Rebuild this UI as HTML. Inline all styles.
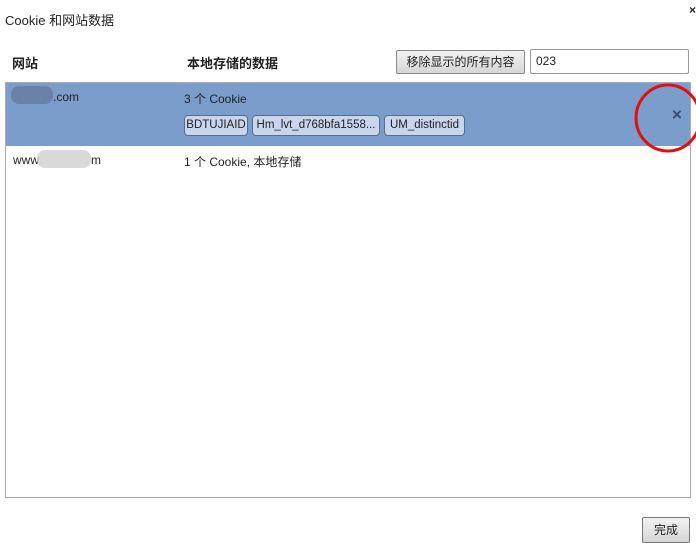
<!DOCTYPE html>
<html><head><meta charset="utf-8"><style>
body{margin:0;width:696px;height:537px;background:#fff;position:relative;overflow:hidden;font-family:"Liberation Sans","Noto Sans CJK SC",sans-serif;font-size:12px;color:#222}
.a{position:absolute;white-space:nowrap}
.chip{position:absolute;top:115px;height:19px;border:1px solid #5a6d8c;border-radius:4px;background:#c7d6ec;line-height:19px;text-align:center;font-size:11.5px;overflow:hidden}
</style></head><body>
<div class="a" style="left:5px;top:10px;font-size:13px">Cookie 和网站数据</div>
<div class="a" style="left:689px;top:3px;font-size:12px;font-weight:bold">×</div>
<div class="a" style="left:12px;top:53px;font-weight:bold;font-size:13px">网站</div>
<div class="a" style="left:187px;top:53px;font-weight:bold;font-size:13px">本地存储的数据</div>
<div class="a" style="left:396px;top:50px;width:127px;height:22px;border:1px solid #8a8a8a;border-radius:2px;background:linear-gradient(#f2f2f2,#d6d6d6);text-align:center;line-height:22px;font-size:12px">移除显示的所有内容</div>
<div class="a" style="left:530px;top:49px;width:152px;height:23px;border:1px solid #999;border-radius:2px;line-height:23px;padding-left:5px">023</div>
<div class="a" style="left:5px;top:82px;width:684px;height:414px;border:1px solid #aaa"></div>
<div class="a" style="left:6px;top:83px;width:684px;height:63px;background:#7b9dcc"></div>
<div class="a" style="left:11px;top:86px;width:42px;height:18px;border-radius:8px;background:#6a81a8"></div>
<div class="a" style="left:53px;top:90px">.com</div>
<div class="a" style="left:184px;top:90px">3 个 Cookie</div>
<div class="chip" style="left:184px;width:62px">BDTUJIAID</div>
<div class="chip" style="left:252px;width:126px">Hm_lvt_d768bfa1558...</div>
<div class="chip" style="left:384px;width:79px">UM_distinctid</div>
<div class="a" style="left:672px;top:105px;font-size:17px;font-weight:bold;color:#3c4a66">×</div>
<svg class="a" style="left:0;top:0" width="696" height="537"><ellipse cx="668" cy="118" rx="32" ry="33" fill="none" stroke="#e01010" stroke-width="3"/></svg>
<div class="a" style="left:13px;top:153px">www</div>
<div class="a" style="left:37px;top:150px;width:54px;height:18px;border-radius:8px;background:#cfcfcf;opacity:.8"></div>
<div class="a" style="left:91px;top:153px">m</div>
<div class="a" style="left:184px;top:153px">1 个 Cookie, 本地存储</div>
<div class="a" style="left:642px;top:517px;width:46px;height:24px;border:1px solid #777;border-radius:2px;background:linear-gradient(#f2f2f2,#d6d6d6);text-align:center;line-height:24px">完成</div>
</body></html>
